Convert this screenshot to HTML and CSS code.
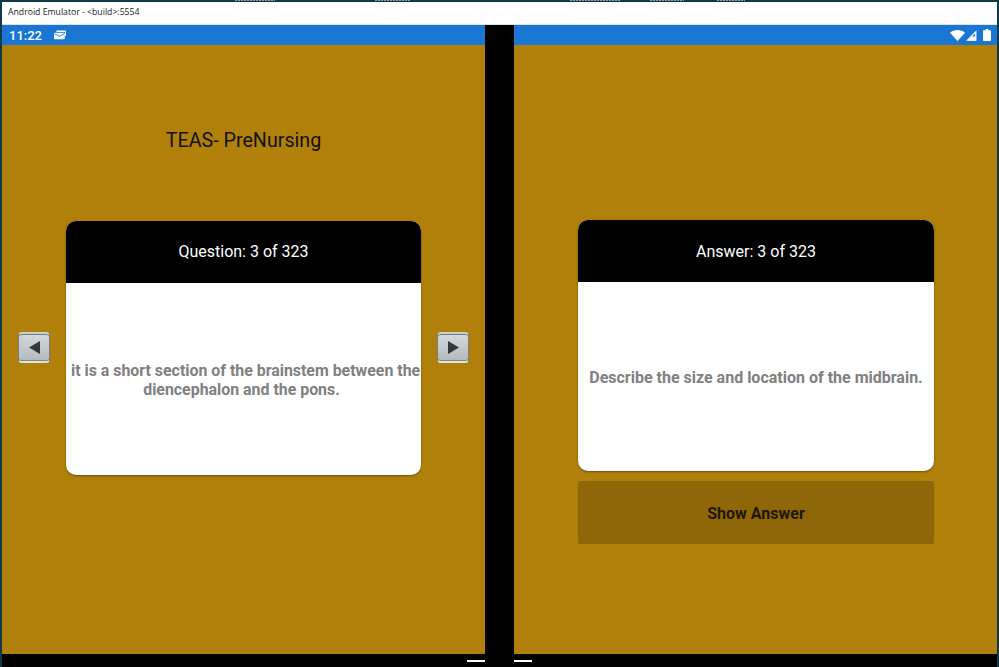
FILE: index.html
```html
<!DOCTYPE html>
<html lang="en">
<head>
    <meta charset="UTF-8">
    <meta name="viewport" content="width=device-width, initial-scale=1.0">
    <title>Android Emulator</title>
    <link rel="stylesheet" href="styles.css">
</head>
<body>
    <!-- Desktop icon labels, only their lower edge shows above the window -->
    <div class="desktop-strip">
        <span class="desktop-label label-backup"></span>
        <span class="desktop-label label-password"></span>
        <span class="desktop-label label-persons"></span>
        <span class="desktop-label label-shortcut"></span>
        <span class="desktop-label label-fences"></span>
    </div>

    <div class="window">
        <div class="title-bar">Android Emulator - &lt;build&gt;:5554</div>

        <div class="screens">
            <!-- Left screen: question -->
            <section class="screen">
                <div class="status-bar">
                    <span class="clock">11:22</span>
                    <svg class="notify-icon" width="12" height="10" viewBox="0 0 12 10">
                        <path fill="#fff" d="M2.5 0.5H11a1 1 0 0 1 1 1V6H11V2H2.5z"/>
                        <path fill="#fff" d="M1 2.8h8.8a1 1 0 0 1 1 1v4.4a1 1 0 0 1-1 1H1a1 1 0 0 1-1-1V3.800a1 1 0 0 1 1-1z"/>
                        <path fill="none" stroke="#1976d2" stroke-width="0.9" d="M0.600 3.800L5.400 6.300L10.200 3.800"/>
                    </svg>
                </div>
                <div class="screen-body question-body">
                    <h1 class="app-title">TEAS- PreNursing</h1>
                    <div class="card-row">
                        <button class="nav-button">
                            <svg width="11" height="13" viewBox="0 0 11 13"><path fill="#2f383d" d="M11 0V13L0 6.500z"/></svg>
                        </button>
                        <div class="card question-card">
                            <div class="card-header">Question: 3 of 323</div>
                            <div class="card-text question-text">
                                <p>it is a short section of the brainstem between the<br>diencephalon and the pons.</p>
                            </div>
                        </div>
                        <button class="nav-button">
                            <svg width="11" height="13" viewBox="0 0 11 13"><path fill="#2f383d" d="M0 0V13L11 6.500z"/></svg>
                        </button>
                    </div>
                </div>
            </section>

            <div class="hinge"></div>

            <!-- Right screen: answer -->
            <section class="screen">
                <div class="status-bar status-right">
                    <svg width="15" height="11" viewBox="0 0 15 11"><path fill="#fff" d="M0 2.800C2 1 4.600 0 7.500 0S13 1 15 2.800L7.500 11z"/></svg>
                    <svg class="signal-icon" width="11" height="11" viewBox="0 0 11 11"><path fill="none" stroke="#fff" stroke-width="1.300" d="M9.800 1.800V10H1.600z"/><path fill="#fff" d="M6 6.500H10V10.500H2.500z"/></svg>
                    <svg class="battery-icon" width="8" height="12" viewBox="0 0 8 12"><path fill="#fff" d="M2.500 0H5.500V1.200H7.300A.7.7 0 0 1 8 1.900V11.300A.7.7 0 0 1 7.300 12H.7A.7.7 0 0 1 0 11.300V1.900A.7.7 0 0 1 .7 1.200H2.500z"/></svg>
                </div>
                <div class="screen-body answer-body">
                    <div class="card answer-card">
                        <div class="card-header">Answer: 3 of 323</div>
                        <div class="card-text answer-text">Describe the size and location of the midbrain.</div>
                    </div>
                    <button class="show-answer">Show Answer</button>
                </div>
            </section>
        </div>

        <div class="nav-bar">
            <span class="gesture-pill"></span>
            <span class="gesture-pill"></span>
        </div>
    </div>
</body>
</html>
```

FILE: styles.css
```css
* {
    margin: 0;
    padding: 0;
    box-sizing: border-box;
}

body {
    width: 999px;
    height: 667px;
    overflow: hidden;
    background: #10384a;
    font-family: Roboto, "Liberation Sans", sans-serif;
}

/* Desktop behind the window */
.desktop-strip {
    height: 2px;
    display: flex;
    background: #12394b;
}

.desktop-label {
    height: 1px;
    background: repeating-linear-gradient(90deg, #8fa0a8 0 2px, #2c4d5c 2px 3px);
}

.label-backup { width: 40px; margin-left: 235px; }
.label-password { width: 35px; margin-left: 100px; }
.label-persons { width: 50px; margin-left: 160px; }
.label-shortcut { width: 34px; margin-left: 30px; }
.label-fences { width: 28px; margin-left: 33px; }

/* Emulator window */
.window {
    height: 665px;
    margin: 0 2px;
    display: flex;
    flex-direction: column;
    background: #000;
}

.title-bar {
    height: 23px;
    padding: 0 6px;
    background: #fff;
    border-bottom: 1px solid #d9e4ef;
    color: #222;
    font: 8.700px/21px "Open Sans", "Liberation Sans", sans-serif;
}

.screens {
    flex: 1;
    display: flex;
}

.screen {
    width: 483px;
    display: flex;
    flex-direction: column;
    background: #b0800a;
}

.hinge {
    width: 29px;
    background: #000;
}

.status-bar {
    height: 20px;
    flex: none;
    padding: 0 7px;
    display: flex;
    align-items: center;
    background: #1976d2;
    color: #fff;
}

.status-right {
    justify-content: flex-end;
    padding-right: 6px;
}

.signal-icon {
    margin-left: 1px;
}

.battery-icon {
    margin-left: 6px;
}

.clock {
    font-size: 13px;
    font-weight: 500;
}

.notify-icon {
    margin-left: 12px;
}

.screen-body {
    flex: 1;
}

/* Question side */
.question-body {
    padding-top: 84px;
}

.app-title {
    height: 24px;
    margin-bottom: 68px;
    text-align: center;
    color: #111;
    font-size: 19.700px;
    font-weight: 400;
    line-height: 24px;
}

.card-row {
    display: flex;
    align-items: center;
    gap: 16px;
    padding-left: 16px;
}

.nav-button {
    width: 32px;
    height: 31px;
    margin-top: -1px;
    display: flex;
    align-items: center;
    justify-content: center;
    border: 1px solid #757e83;
    border-top: 2px solid #cfcfc4;
    border-bottom: 2px solid #e2e2d6;
    border-radius: 4px;
    background: linear-gradient(#d3d9da, #b2babd);
    box-shadow: inset 0 1px 0 #6f787d, inset 0 -1px 0 #7f878b;
}

/* Cards */
.card {
    flex: none;
    display: flex;
    flex-direction: column;
    overflow: hidden;
    border-radius: 10px;
    background: #fff;
    box-shadow: 0 1px 2px rgba(60, 40, 0, 0.55);
}

.question-card {
    width: 355px;
    height: 254px;
}

.question-card .card-header {
    padding-bottom: 2px;
}

.answer-card {
    width: 356px;
    height: 251px;
}

.card-header {
    height: 62px;
    flex: none;
    display: flex;
    align-items: center;
    justify-content: center;
    background: #000;
    color: #fff;
    font-size: 16px;
}

.card-text {
    flex: 1;
    padding-top: 2px;
    display: flex;
    align-items: center;
    justify-content: center;
    text-align: center;
    color: #808080;
    font-size: 15.900px;
    font-weight: 700;
    line-height: 19px;
}

.answer-text {
    font-size: 16px;
}

/* first line runs past the right side of the box, as in the app */
.question-text {
    justify-content: flex-start;
    padding-left: 5px;
}

.question-text p {
    flex: none;
    width: 341px;
    white-space: nowrap;
}

/* Answer side */
.answer-body {
    padding: 175px 0 0 64px;
}

.show-answer {
    display: block;
    width: 356px;
    height: 63px;
    margin-top: 10px;
    padding-top: 2px;
    border: 0;
    border-radius: 2px;
    background: #8f6708;
    color: #1d1602;
    font-family: Roboto, "Liberation Sans", sans-serif;
    font-size: 16px;
    font-weight: 700;
}

/* Bottom gesture bar */
.nav-bar {
    height: 13px;
    flex: none;
    padding: 6px 0 0 465px;
    display: flex;
    gap: 29px;
    background: #000;
}

.gesture-pill {
    width: 18px;
    height: 2px;
    background: #fff;
}
```
